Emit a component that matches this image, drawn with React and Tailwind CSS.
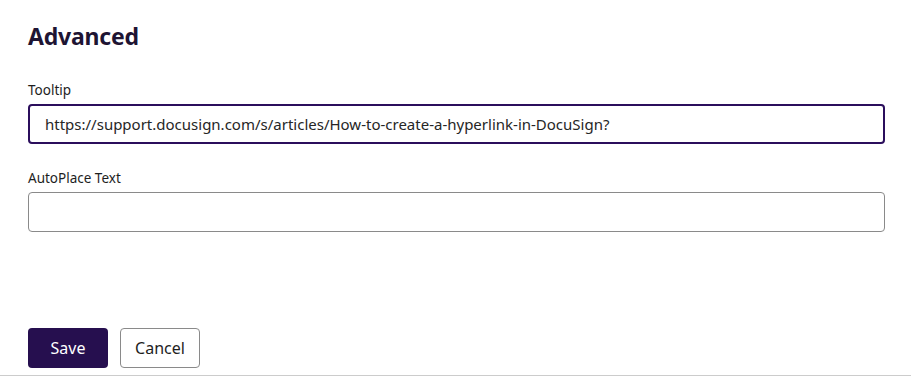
export default function App() {
  return (
    <div className="w-[911px] h-[384px] bg-white" style={{ fontFamily: '"Noto Sans", Inter, sans-serif' }}>
      <div className="h-[376px] border-b border-[#cccccc] pl-[28px] pr-[26px] flex flex-col">
        <h2 className="mt-[22px] text-[23px] leading-[28px] font-bold text-[#1e1433] tracking-[-0.2px]">Advanced</h2>
        <label className="mt-[31px] text-[13.5px] leading-[18px] text-[#1e1e1e]">Tooltip</label>
        <div className="mt-[5px] h-[40px] rounded-[4px] border-2 border-[#2b0e5c] flex items-center pl-[15px] text-[15px] text-[#262626]">
          https://support.docusign.com/s/articles/How-to-create-a-hyperlink-in-DocuSign?
        </div>
        <label className="mt-[25px] text-[13.5px] leading-[18px] text-[#1e1e1e]">AutoPlace Text</label>
        <div className="mt-[5px] h-[40px] rounded-[4px] border border-[#8a8a8a]"></div>
        <div className="mt-[96px] flex gap-[12px]">
          <button className="w-[80px] h-[40px] rounded-[4px] bg-[#260f4f] text-white text-[16px]">Save</button>
          <button className="w-[80px] h-[40px] rounded-[4px] border border-[#8a8a8a] bg-white text-[#1e1e1e] text-[16px]">Cancel</button>
        </div>
      </div>
    </div>
  );
}
